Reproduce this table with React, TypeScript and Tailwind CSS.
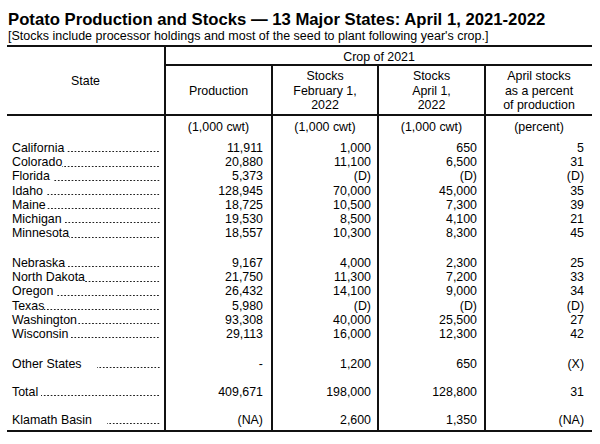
type Row = { name: string; sp?: boolean; gap?: boolean; vals: string[] };

const groupA: Row[] = [
  { name: "California", sp: true, vals: ["11,911", "1,000", "650", "5"] },
  { name: "Colorado", vals: ["20,880", "11,100", "6,500", "31"] },
  { name: "Florida", sp: true, vals: ["5,373", "(D)", "(D)", "(D)"] },
  { name: "Idaho", sp: true, vals: ["128,945", "70,000", "45,000", "35"] },
  { name: "Maine", vals: ["18,725", "10,500", "7,300", "39"] },
  { name: "Michigan", sp: true, vals: ["19,530", "8,500", "4,100", "21"] },
  { name: "Minnesota", vals: ["18,557", "10,300", "8,300", "45"] },
];

const groupB: Row[] = [
  { name: "Nebraska", sp: true, vals: ["9,167", "4,000", "2,300", "25"] },
  { name: "North Dakota", vals: ["21,750", "11,300", "7,200", "33"] },
  { name: "Oregon", sp: true, vals: ["26,432", "14,100", "9,000", "34"] },
  { name: "Texas", vals: ["5,980", "(D)", "(D)", "(D)"] },
  { name: "Washington", vals: ["93,308", "40,000", "25,500", "27"] },
  { name: "Wisconsin", sp: true, vals: ["29,113", "16,000", "12,300", "42"] },
];

const other: Row = { name: "Other States", gap: true, vals: ["-", "1,200", "650", "(X)"] };
const total: Row = { name: "Total", sp: true, vals: ["409,671", "198,000", "128,800", "31"] };
const klamath: Row = { name: "Klamath Basin", gap: true, vals: ["(NA)", "2,600", "1,350", "(NA)"] };

const line = "border-r-2 border-[#111]";

// dotted leader drawn as a repeating background, anchored to the right edge
const leader =
  "min-w-0 flex-1 bg-[radial-gradient(circle,#222_0.75px,transparent_1px)] bg-[length:3.45px_3px] bg-[position:right_0_top_9.4px] bg-repeat-x";

function StateCell({ r, last }: { r: Row; last?: boolean }) {
  return (
    <td className={`${line} p-0 pl-[5px] pr-[4px] ${last ? "border-b-2 pb-[3px]" : ""}`}>
      <div className="flex whitespace-nowrap">
        <span>{r.name}</span>
        <span className={`${leader} ${r.gap ? "ml-[15px]" : r.sp ? "ml-[3px]" : ""}`} />
      </div>
    </td>
  );
}

function DataRow({ r, last }: { r: Row; last?: boolean }) {
  const b = last ? "border-b-2 pb-[3px]" : "";
  return (
    <tr>
      <StateCell r={r} last={last} />
      <td className={`${line} p-0 pr-[8px] text-right ${b}`}>{r.vals[0]}</td>
      <td className={`${line} p-0 pr-[6px] text-right ${b}`}>{r.vals[1]}</td>
      <td className={`${line} p-0 pr-[7px] text-right ${b}`}>{r.vals[2]}</td>
      <td className={`border-[#111] p-0 pr-[8px] text-right ${b}`}>{r.vals[3]}</td>
    </tr>
  );
}

function Spacer({ h }: { h: string }) {
  return (
    <tr className={h}>
      <td className={`${line} p-0`} />
      <td className={`${line} p-0`} />
      <td className={`${line} p-0`} />
      <td className={`${line} p-0`} />
      <td className="p-0" />
    </tr>
  );
}

function HeadCell({ lines, lastCol }: { lines: string[]; lastCol?: boolean }) {
  return (
    <th
      className={`${lastCol ? "border-[#111]" : line} border-b-2 p-0 pt-[2px] text-center align-middle font-normal leading-[14.5px]`}
    >
      {lines.map((l) => (
        <div key={l}>{l}</div>
      ))}
    </th>
  );
}

export default function App() {
  return (
    <div className="h-[444px] w-[600px] bg-white text-black" style={{ fontFamily: '"Liberation Sans", Arial, sans-serif' }}>
      <div className="pl-[8px] pt-[11px]">
        <h1 className="whitespace-nowrap text-[16.7px] font-bold leading-[18px]">
          Potato Production and Stocks — 13 Major States: April 1, 2021-2022
        </h1>
        <p className="whitespace-nowrap text-[12.5px] leading-[14px]">
          [Stocks include processor holdings and most of the seed to plant following year's crop.]
        </p>
      </div>

      <table className="ml-[7px] mt-[2px] w-[585px] table-fixed border-separate border-spacing-0 text-[12.4px]">
        <colgroup>
          <col className="w-[159px]" />
          <col className="w-[107px]" />
          <col className="w-[106px]" />
          <col className="w-[107px]" />
          <col className="w-[106px]" />
        </colgroup>
        <thead>
          <tr className="h-[21px]">
            <th
              rowSpan={2}
              className={`${line} border-y-2 p-0 pt-[1px] text-center align-middle font-normal leading-[14px]`}
            >
              State
            </th>
            <th colSpan={4} className="border-y-2 border-[#111] p-0 pt-[3px] text-center align-middle font-normal leading-[14px]">
              Crop of 2021
            </th>
          </tr>
          <tr className="h-[50px]">
            <HeadCell lines={["Production"]} />
            <HeadCell lines={["Stocks", "February 1,", "2022"]} />
            <HeadCell lines={["Stocks", "April 1,", "2022"]} />
            <HeadCell lines={["April stocks", "as a percent", "of production"]} lastCol />
          </tr>
        </thead>
        <tbody className="leading-[14.2px]">
          <tr className="h-[25px]">
            <td className={`${line} p-0`} />
            <td className={`${line} p-0 pt-[4px] text-center align-top`}>(1,000 cwt)</td>
            <td className={`${line} p-0 pt-[4px] text-center align-top`}>(1,000 cwt)</td>
            <td className={`${line} p-0 pt-[4px] text-center align-top`}>(1,000 cwt)</td>
            <td className="p-0 pt-[4px] text-center align-top">(percent)</td>
          </tr>
          {groupA.map((r) => (
            <DataRow key={r.name} r={r} />
          ))}
          <Spacer h="h-[15.5px]" />
          {groupB.map((r) => (
            <DataRow key={r.name} r={r} />
          ))}
          <Spacer h="h-[15.8px]" />
          <DataRow r={other} />
          <Spacer h="h-[13.8px]" />
          <DataRow r={total} />
          <Spacer h="h-[13.8px]" />
          <DataRow r={klamath} last />
        </tbody>
      </table>
    </div>
  );
}
